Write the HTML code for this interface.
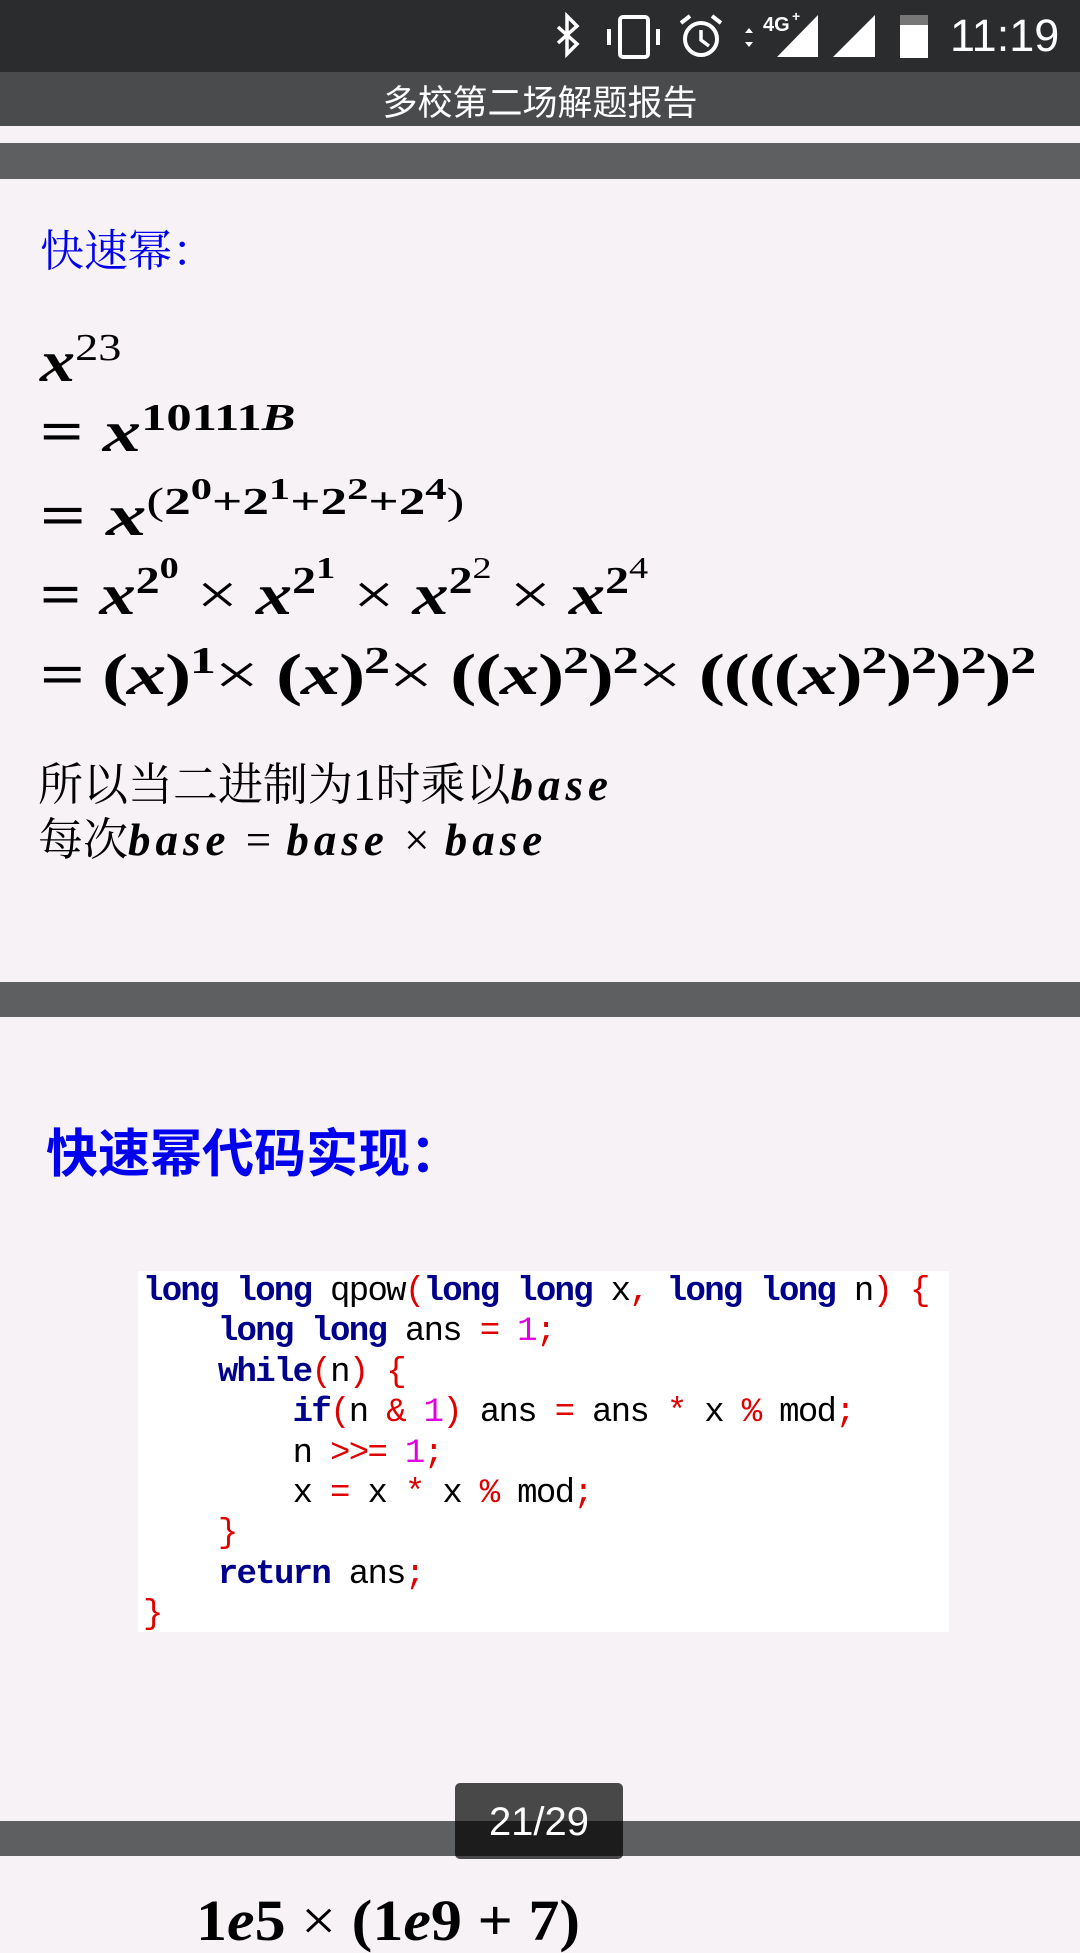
<!DOCTYPE html>
<html><head><meta charset="utf-8"><style>
*{margin:0;padding:0;box-sizing:border-box}
body{width:1080px;height:1920px;overflow:hidden;background:#f6f2f6;position:relative;font-family:"Liberation Sans","Noto Sans CJK SC",sans-serif}
.abs{position:absolute}
.m{font-family:"Liberation Serif","Noto Serif CJK SC",serif;font-weight:bold;color:#000;white-space:nowrap;line-height:1;transform-origin:0 0}
.m i{font-style:italic}
.m sup{font-size:0.66em;vertical-align:0;position:relative;top:-0.55em}
.m sup sup{font-size:0.8em;top:-0.5em}
.t b{letter-spacing:5px}
.code{font-family:"Liberation Mono",monospace;font-size:34px;line-height:40.4px;white-space:pre;color:#000;letter-spacing:-1.7px}
.k{color:#00008b;font-weight:bold}.r{color:#e00000}.p{color:#e000e0}
</style></head><body>
<div class="abs" style="left:0;top:0;width:1080px;height:72px;background:#2b2c2e"></div>
<svg class="abs" style="left:540px;top:0" width="400" height="72" viewBox="0 0 400 72" fill="#fff" stroke="#fff">
<path d="M18 27 L37 44 L27 54 L27 16 L37 26 L18 43" fill="none" stroke-width="3.5"/>
<rect x="80" y="17" width="28" height="40" rx="3" fill="none" stroke-width="4"/>
<rect x="67" y="29" width="4" height="16" stroke="none"/><rect x="116" y="29" width="4" height="16" stroke="none"/>
<circle cx="161" cy="39" r="16" fill="none" stroke-width="4"/>
<path d="M161 30 V40 L169 46" fill="none" stroke-width="3.5"/>
<path d="M141 23 L150 16 M181 23 L172 16" stroke-width="4"/>
<path d="M205 33 L209 28 L213 33Z M205 42 L209 47 L213 42Z" stroke="none"/>
<text x="223" y="31" font-family="Liberation Sans" font-weight="bold" font-size="20" stroke="none">4G</text>
<text x="252" y="21" font-family="Liberation Sans" font-weight="bold" font-size="14" stroke="none">+</text>
<path d="M237 57 L278 15 L278 57Z" stroke="none"/>
<path d="M293 57 L335 15 L335 57Z" stroke="none"/>
<rect x="360" y="15" width="28" height="10" fill="#777" stroke="none"/>
<rect x="360" y="25" width="28" height="33" stroke="none"/>
</svg>
<div class="abs" style="left:950px;top:10px;font-size:45px;color:#fff;font-family:'Liberation Sans',sans-serif">11:19</div>

<div class="abs" style="left:0;top:72px;width:1080px;height:54px;background:#4a4b4d"></div>
<div class="abs" style="left:0;top:75px;width:1080px;text-align:center;font-size:35px;color:#fff">多校第二场解题报告</div>
<div class="abs" style="left:0;top:143px;width:1080px;height:36px;background:#5e5f61"></div>

<div class="abs" style="left:40px;top:215px;font-size:44px;color:#0000ee;font-family:'Liberation Serif','Noto Serif CJK SC',serif">快速幂：</div>

<div class="abs m" style="left:40px;top:333px;font-size:58px;transform:scaleX(1.21)"><i>x</i><sup style="font-weight:normal">23</sup></div>
<div class="abs m" style="left:40px;top:403px;font-size:58px;transform:scaleX(1.32)">= <i>x</i><sup>10111<i>B</i></sup></div>
<div class="abs m" style="left:40px;top:487px;font-size:58px;transform:scaleX(1.39)">= <i>x</i><sup><span style="font-weight:normal">(</span>2<sup>0</sup>+2<sup>1</sup>+2<sup>2</sup>+2<sup>4</sup><span style="font-weight:normal">)</span></sup></div>
<div class="abs m" style="left:40px;top:566px;font-size:58px;transform:scaleX(1.25)">= <i>x</i><sup>2<sup>0</sup></sup> <span style="font-weight:normal">×</span> <i>x</i><sup>2<sup>1</sup></sup> <span style="font-weight:normal">×</span> <i>x</i><sup>2<sup style="font-weight:normal">2</sup></sup> <span style="font-weight:normal">×</span> <i>x</i><sup>2<sup style="font-weight:normal">4</sup></sup></div>
<div class="abs m" style="left:40px;top:646px;font-size:58px;letter-spacing:-1px;transform:scaleX(1.36)">= (<i>x</i>)<sup>1</sup><span style="font-weight:normal">×</span> (<i>x</i>)<sup>2</sup><span style="font-weight:normal">×</span> ((<i>x</i>)<sup>2</sup>)<sup>2</sup><span style="font-weight:normal">×</span> ((((<i>x</i>)<sup>2</sup>)<sup>2</sup>)<sup>2</sup>)<sup>2</sup></div>

<div class="abs m t" style="left:38px;top:763px;font-size:45px;font-weight:normal">所以当二进制为1时乘以<b><i>base</i></b></div>
<div class="abs m t" style="left:38px;top:818px;font-size:45px;font-weight:normal;word-spacing:4px">每次<b><i>base</i></b> = <b><i>base</i></b> × <b><i>base</i></b></div>

<div class="abs" style="left:0;top:982px;width:1080px;height:35px;background:#5e5f61"></div>

<div class="abs" style="left:46px;top:1112px;font-size:52px;font-weight:bold;color:#0000ee;font-family:'Liberation Sans','Noto Sans CJK SC',sans-serif">快速幂代码实现：</div>

<div class="abs" style="left:138px;top:1271px;width:811px;height:361px;background:#fff"></div>
<div class="abs code" style="left:143px;top:1272px"><span class="k">long long</span> qpow<span class="r">(</span><span class="k">long long</span> x<span class="r">,</span> <span class="k">long long</span> n<span class="r">)</span> <span class="r">{</span>
    <span class="k">long long</span> ans <span class="r">=</span> <span class="p">1</span><span class="r">;</span>
    <span class="k">while</span><span class="r">(</span>n<span class="r">)</span> <span class="r">{</span>
        <span class="k">if</span><span class="r">(</span>n <span class="r">&amp;</span> <span class="p">1</span><span class="r">)</span> ans <span class="r">=</span> ans <span class="r">*</span> x <span class="r">%</span> mod<span class="r">;</span>
        n <span class="r">&gt;&gt;=</span> <span class="p">1</span><span class="r">;</span>
        x <span class="r">=</span> x <span class="r">*</span> x <span class="r">%</span> mod<span class="r">;</span>
    <span class="r">}</span>
    <span class="k">return</span> ans<span class="r">;</span>
<span class="r">}</span></div>

<div class="abs" style="left:0;top:1821px;width:1080px;height:35px;background:#5e5f61"></div>
<div class="abs m" style="left:196px;top:1892px;font-size:58px;transform:scaleX(1.07)">1<i>e</i>5 <span style="font-weight:normal">×</span> (1<i>e</i>9 + 7)</div>

<div class="abs" style="left:455px;top:1783px;width:168px;height:76px;border-radius:5px;background:rgba(0,0,0,0.7)"></div>
<div class="abs" style="left:455px;top:1800px;width:168px;text-align:center;font-size:40px;color:#fff">21/29</div>
</body></html>
